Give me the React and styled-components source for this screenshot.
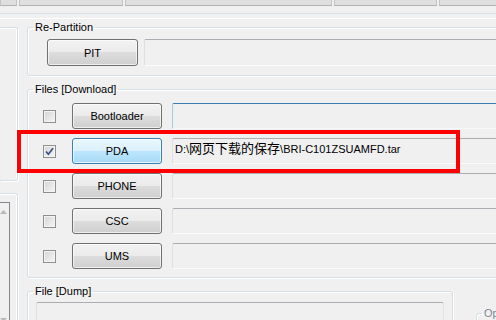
import React from "react";
import styled, { createGlobalStyle } from "styled-components";

const GlobalStyle = createGlobalStyle`
  html, body {
    margin: 0;
    padding: 0;
    background: #f0f0f0;
  }
  body {
    font-family: "Liberation Sans", "Noto Sans CJK SC", sans-serif;
    font-size: 11px;
    color: #000;
  }
`;

const tabs = [17, 104, 207, 103, 80];

const files = [
  { name: "Bootloader", hover: true },
  { name: "PDA", checked: true, active: true, path: true },
  { name: "PHONE" },
  { name: "CSC" },
  { name: "UMS" },
];

const CheckMark = () => (
  <svg width="9" height="9" viewBox="0 0 9 9">
    <path d="M1 4.5 L3.4 7.2 L8 1.2" fill="none" stroke="#3b4f8a" strokeWidth="1.7" />
  </svg>
);

const Arrow = ({ up }) => (
  <svg width="7" height="4" viewBox="0 0 7 4">
    <path d={up ? "M0 4 L3.5 0 L7 4 Z" : "M0 0 L3.5 4 L7 0 Z"} fill="#b9b9b9" />
  </svg>
);

export default function App() {
  return (
    <Screen>
      <GlobalStyle />
      <TabStrip>
        {tabs.map((w, i) => (
          <Tab key={i} $w={w} />
        ))}
      </TabStrip>
      <Rule $top={7} $color="#d8e1e8" />
      <Rule $top={4} $color="#ffffff" />

      <Body>
        <LeftCol>
          <SidePanel $h={154} />
          <SidePanel $h={140}>
            <ListStub>
              <Arrow up />
              <Arrow />
            </ListStub>
          </SidePanel>
        </LeftCol>

        <Main>
          <GroupBox>
            <Legend>Re-Partition</Legend>
            <GroupBody $pad="5px 0 9px 19px">
              <Row>
                <Button $w={91} $h={27}>PIT</Button>
                <Field $h={27} />
              </Row>
            </GroupBody>
          </GroupBox>

          <GroupBox>
            <Legend>Files [Download]</Legend>
            <GroupBody $pad="7px 0 8px 15px">
              <FileList>
                {files.map((f) => (
                  <Row key={f.name}>
                    <Check>{f.checked && <CheckMark />}</Check>
                    <Button $w={90} $h={26} $active={f.active}>
                      {f.name}
                    </Button>
                    <Field $h={26} $hover={f.hover} $gap={10}>
                      {f.path && (
                        <>
                          {"D:\\"}
                          <Cjk>网页下载的保存</Cjk>
                          {"\\BRI-C101ZSUAMFD.tar"}
                        </>
                      )}
                    </Field>
                  </Row>
                ))}
              </FileList>
            </GroupBody>
          </GroupBox>

          <BottomRow>
            <GroupBox $w={426}>
              <Legend>File [Dump]</Legend>
              <GroupBody $pad="4px 8px 0 8px">
                <Field $h={40} />
              </GroupBody>
            </GroupBox>
            <OptionBox>
              <Legend $faded>Option</Legend>
            </OptionBox>
          </BottomRow>
        </Main>
      </Body>

      <Highlight />
    </Screen>
  );
}

const Screen = styled.div`
  position: relative;
  width: 496px;
  height: 320px;
  overflow: hidden;
`;

const TabStrip = styled.div`
  display: flex;
  gap: 2px;
  height: 6px;
`;

const Tab = styled.div`
  box-sizing: border-box;
  flex-shrink: 0;
  width: ${(p) => p.$w}px;
  height: 6px;
  background: #dfdfdf;
  border: 1px solid #c4c4c4;
  border-top: none;
  border-bottom-color: #b2b2b2;
`;

const Rule = styled.div`
  margin-top: ${(p) => p.$top}px;
  height: 1px;
  background: ${(p) => p.$color};
`;

const Body = styled.div`
  display: flex;
  align-items: flex-start;
  margin-top: 1px;
`;

const LeftCol = styled.div`
  flex-shrink: 0;
  width: 18px;
  display: flex;
  flex-direction: column;
  gap: 12px;
  padding-top: 7px;
`;

const SidePanel = styled.div`
  box-sizing: border-box;
  height: ${(p) => p.$h}px;
  padding-top: 8px;
  border: 1px solid #d5dfe5;
  border-left: none;
  border-radius: 0 3px 3px 0;
  box-shadow: inset -1px 1px 0 #fff, 1px 1px 0 #fff;
`;

const ListStub = styled.div`
  box-sizing: border-box;
  width: 10px;
  height: 125px;
  padding: 7px 2px 5px 0;
  display: flex;
  flex-direction: column;
  justify-content: space-between;
  align-items: center;
  border-top: 1px solid #828790;
  border-right: 1px solid #828790;
`;

const Main = styled.div`
  flex-shrink: 0;
  width: 540px;
  margin-left: 9px;
  display: flex;
  flex-direction: column;
  gap: 6px;
`;

const GroupBox = styled.fieldset`
  box-sizing: border-box;
  margin: 0;
  padding: 0;
  min-width: 0;
  width: ${(p) => (p.$w ? `${p.$w}px` : "auto")};
  flex-shrink: 0;
  border: 1px solid #d5dfe5;
  border-radius: 3px;
  box-shadow: inset 1px 1px 0 #fff, 1px 1px 0 #fff;
`;

const Legend = styled.legend`
  margin-left: 5px;
  padding: 0 2px;
  font-size: 11px;
  line-height: 14px;
  color: ${(p) => (p.$faded ? "#7a8594" : "#000")};
`;

const GroupBody = styled.div`
  padding: ${(p) => p.$pad};
`;

const FileList = styled.div`
  display: flex;
  flex-direction: column;
  gap: 9px;
`;

const Row = styled.div`
  display: flex;
  align-items: center;
  gap: 6px;
`;

const Check = styled.span`
  box-sizing: border-box;
  flex-shrink: 0;
  width: 13px;
  height: 13px;
  margin-right: 10px;
  display: flex;
  align-items: center;
  justify-content: center;
  border: 1px solid #8e8f8f;
  background: linear-gradient(135deg, #d4d4d4, #f6f6f6);
  box-shadow: inset 0 0 0 1px #f4f4f4;
`;

const Button = styled.button`
  box-sizing: border-box;
  flex-shrink: 0;
  width: ${(p) => p.$w}px;
  height: ${(p) => p.$h}px;
  padding: 0;
  font-family: inherit;
  font-size: 11px;
  color: #000;
  border: 1px solid ${(p) => (p.$active ? "#3c7fb1" : "#707070")};
  border-radius: 3px;
  background: ${(p) =>
    p.$active
      ? "linear-gradient(#eaf6fd 0%, #d9f0fc 50%, #bee6fd 50%, #a7d9f5 100%)"
      : "linear-gradient(#f2f2f2 0%, #ebebeb 50%, #dddddd 50%, #cfcfcf 100%)"};
  box-shadow: inset 0 0 0 1px rgba(255, 255, 255, 0.65);
`;

const Field = styled.div`
  box-sizing: border-box;
  flex: 1;
  height: ${(p) => p.$h}px;
  margin-left: ${(p) => (p.$gap ? p.$gap - 6 : 0)}px;
  padding: 2px 2px 0;
  line-height: 14px;
  white-space: nowrap;
  background: #f0f0f0;
  border: 1px solid;
  border-color: ${(p) =>
    p.$hover
      ? "#3d7bad #b5cfe7 #f4f8fb #a4c9e3"
      : "#abadb3 #e2e3ea #fbfbfb #dbdfe6"};
  border-radius: 2px;
`;

const Cjk = styled.span`
  font-family: "Noto Sans CJK SC", sans-serif;
  font-size: 13px;
`;

const BottomRow = styled.div`
  display: flex;
  align-items: flex-start;
  gap: 23px;
`;

const OptionBox = styled(GroupBox)`
  width: 80px;
  height: 40px;
  margin-top: 22px;
`;

const Highlight = styled.div`
  position: absolute;
  left: 17px;
  top: 130px;
  width: 443px;
  height: 43px;
  box-sizing: border-box;
  border: 4px solid #ff0000;
  pointer-events: none;
`;
